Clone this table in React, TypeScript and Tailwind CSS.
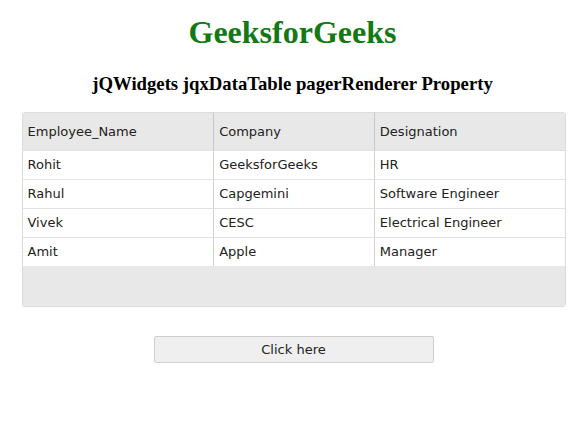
const rows = [
  ["Rohit", "GeeksforGeeks", "HR"],
  ["Rahul", "Capgemini", "Software Engineer"],
  ["Vivek", "CESC", "Electrical Engineer"],
  ["Amit", "Apple", "Manager"],
];

const cols = ["w-[192px]", "w-[161px]", "w-[190px]"];

export default function App() {
  return (
    <div className="w-[585px] h-[430px] bg-white flex flex-col items-center">
      <h1 className="mt-[14px] text-[32px] font-bold leading-[37px] text-[#137a13] font-['Liberation_Serif',serif]">
        GeeksforGeeks
      </h1>
      <h3 className="mt-[22px] text-[18.72px] font-bold leading-[22px] text-black font-['Liberation_Serif',serif]">
        jQWidgets jqxDataTable pagerRenderer Property
      </h3>
      <div className="mt-[17px] ml-[2px] w-[544px] border border-[#dcdcdc] rounded-[3px] overflow-hidden font-['DejaVu_Sans',Verdana,sans-serif] text-[13px] text-[#222]">
        <div className="flex h-[38px] bg-[#e8e8e8] border-b border-[#e0e0e0]">
          {["Employee_Name", "Company", "Designation"].map((h, i) => (
            <div
              key={h}
              className={`${cols[i]} flex items-center pl-[5px] ${i < 2 ? "border-r border-[#c8c8c8]" : ""}`}
            >
              {h}
            </div>
          ))}
        </div>
        {rows.map((r, ri) => (
          <div
            key={ri}
            className={`flex bg-white ${ri < 3 ? "h-[29px] border-b border-[#e2e2e2]" : "h-[28px]"}`}
          >
            {r.map((c, i) => (
              <div
                key={i}
                className={`${cols[i]} flex items-center pl-[5px] ${i < 2 ? "border-r border-[#d0d0d0]" : ""}`}
              >
                {c}
              </div>
            ))}
          </div>
        ))}
        <div className="h-[40px] bg-[#e8e8e8]" />
      </div>
      <button className="mt-[29px] ml-[2px] w-[280px] h-[27px] bg-[#efefef] border border-[#cfcfcf] rounded-[2px] text-[13px] text-[#222] font-['DejaVu_Sans',Verdana,sans-serif]">
        Click here
      </button>
    </div>
  );
}
